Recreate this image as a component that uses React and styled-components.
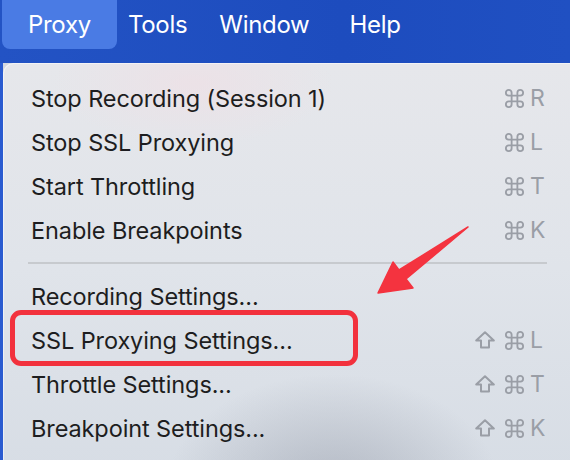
import styled, { createGlobalStyle } from "styled-components";

const Global = createGlobalStyle`
  html, body {
    margin: 0;
    padding: 0;
    width: 570px;
    height: 460px;
    overflow: hidden;
    background: #cfd6e4;
  }
  body {
    font-family: Inter, "Noto Sans", sans-serif;
    -webkit-font-smoothing: antialiased;
  }
`

const Screen = styled.div`
  position: relative;
  width: 570px;
  height: 460px;
  overflow: hidden;
  display: flex;
  flex-direction: column;
  background: linear-gradient(90deg, #2a5bd0 0px, #2a5bd0 3px, #d5d9e0 3px);
`

const MenuBar = styled.nav`
  height: 63px;
  flex-shrink: 0;
  display: flex;
  align-items: flex-start;
  padding-left: 2px;
  background: linear-gradient(90deg, #2353c4, #1d4cbe 60%, #2050c2);
`

const BarItem = styled.div`
  height: 49px;
  display: flex;
  align-items: center;
  padding: 0 ${p => p.$pad || 19}px;
  border-radius: 0 0 8px 8px;
  color: #fff;
  font-size: 24px;
  letter-spacing: -0.3px;
  background: ${p => (p.$active ? "#4a7be4" : "transparent")};
`

const Panel = styled.div`
  flex: 1;
  margin-left: 3px;
  padding-top: 13px;
  border-top-left-radius: 10px;
  box-shadow: inset 1px 1px 0 rgba(255, 255, 255, 0.5);
  background:
    radial-gradient(ellipse 240px 170px at 330px 430px, rgba(140, 146, 160, 0.5), transparent 70%),
    radial-gradient(ellipse 200px 90px at 190px 20px, rgba(240, 222, 228, 0.6), transparent 70%),
    linear-gradient(180deg, #e6e7eb 0%, #e0e4ea 50%, #d7dde5 100%);
  display: flex;
  flex-direction: column;
`

const Row = styled.div`
  height: 44px;
  display: flex;
  align-items: center;
  justify-content: space-between;
  padding: 0 22px 0 28px;
  font-size: 23.5px;
  color: #1d1d20;
  letter-spacing: -0.1px;
  flex-shrink: 0;
`

const Keys = styled.div`
  display: flex;
  align-items: center;
  color: #9a9ea6;
  font-size: 23px;
`

const Icon = styled.svg`
  display: block;
  flex-shrink: 0;
  margin-right: ${p => p.$gap}px;
  fill: none;
  stroke: currentColor;
  stroke-linecap: round;
  stroke-linejoin: round;
`

const Letter = styled.span`
  width: 18px;
  line-height: 1;
`

const Separator = styled.hr`
  margin: 10px 23px 10px 25px;
  border: none;
  height: 2px;
  background: #c7cace;
  flex-shrink: 0;
`

const Highlight = styled.div`
  position: absolute;
  left: 10px;
  top: 310px;
  width: 338px;
  height: 46px;
  border: 5px solid #f2313d;
  border-radius: 11px;
  pointer-events: none;
`

const Arrow = styled.svg`
  position: absolute;
  left: 0;
  top: 0;
  pointer-events: none;
`

const items = [
  [
    { label: "Stop Recording (Session 1)", key: "R" },
    { label: "Stop SSL Proxying", key: "L" },
    { label: "Start Throttling", key: "T" },
    { label: "Enable Breakpoints", key: "K" },
  ],
  [
    { label: "Recording Settings..." },
    { label: "SSL Proxying Settings...", key: "L", shift: true },
    { label: "Throttle Settings...", key: "T", shift: true },
    { label: "Breakpoint Settings...", key: "K", shift: true },
  ],
]

const ShiftIcon = () => (
  <Icon $gap={8} width="20" height="18" viewBox="0 0 20 18" strokeWidth="2">
    <path d="M10 1.3 L18.8 9.6 H14 V16.6 H6 V9.6 H1.2 Z" />
  </Icon>
)

const CmdIcon = () => (
  <Icon $gap={4} width="23" height="23" viewBox="0 0 24 24" strokeWidth="1.9">
    <path d="M15 6v12a3 3 0 1 0 3-3H6a3 3 0 1 0 3 3V6a3 3 0 1 0-3 3h12a3 3 0 1 0-3-3" />
  </Icon>
)

function Shortcut({ k, shift }) {
  if (!k) return null
  return (
    <Keys>
      {shift && <ShiftIcon />}
      <CmdIcon />
      <Letter>{k}</Letter>
    </Keys>
  )
}

export default function App() {
  return (
    <>
      <Global />
      <Screen>
        <MenuBar>
          <BarItem $active $pad={26}>Proxy</BarItem>
          <BarItem $pad={11}>Tools</BarItem>
          <BarItem $pad={21}>Window</BarItem>
          <BarItem $pad={19}>Help</BarItem>
        </MenuBar>
        <Panel>
          {items.map((group, i) => (
            <div key={i}>
              {group.map(it => (
                <Row key={it.label}>
                  <span>{it.label}</span>
                  <Shortcut k={it.key} shift={it.shift} />
                </Row>
              ))}
              <Separator />
            </div>
          ))}
        </Panel>
        <Highlight />
        <Arrow width="570" height="460" viewBox="0 0 570 460">
          <polygon
            points="468,227 406,279 413,288 378,293 393,262 399,270"
            fill="#f4333f"
            stroke="#f4333f"
            strokeWidth="1.5"
            strokeLinejoin="round"
          />
        </Arrow>
      </Screen>
    </>
  )
}
